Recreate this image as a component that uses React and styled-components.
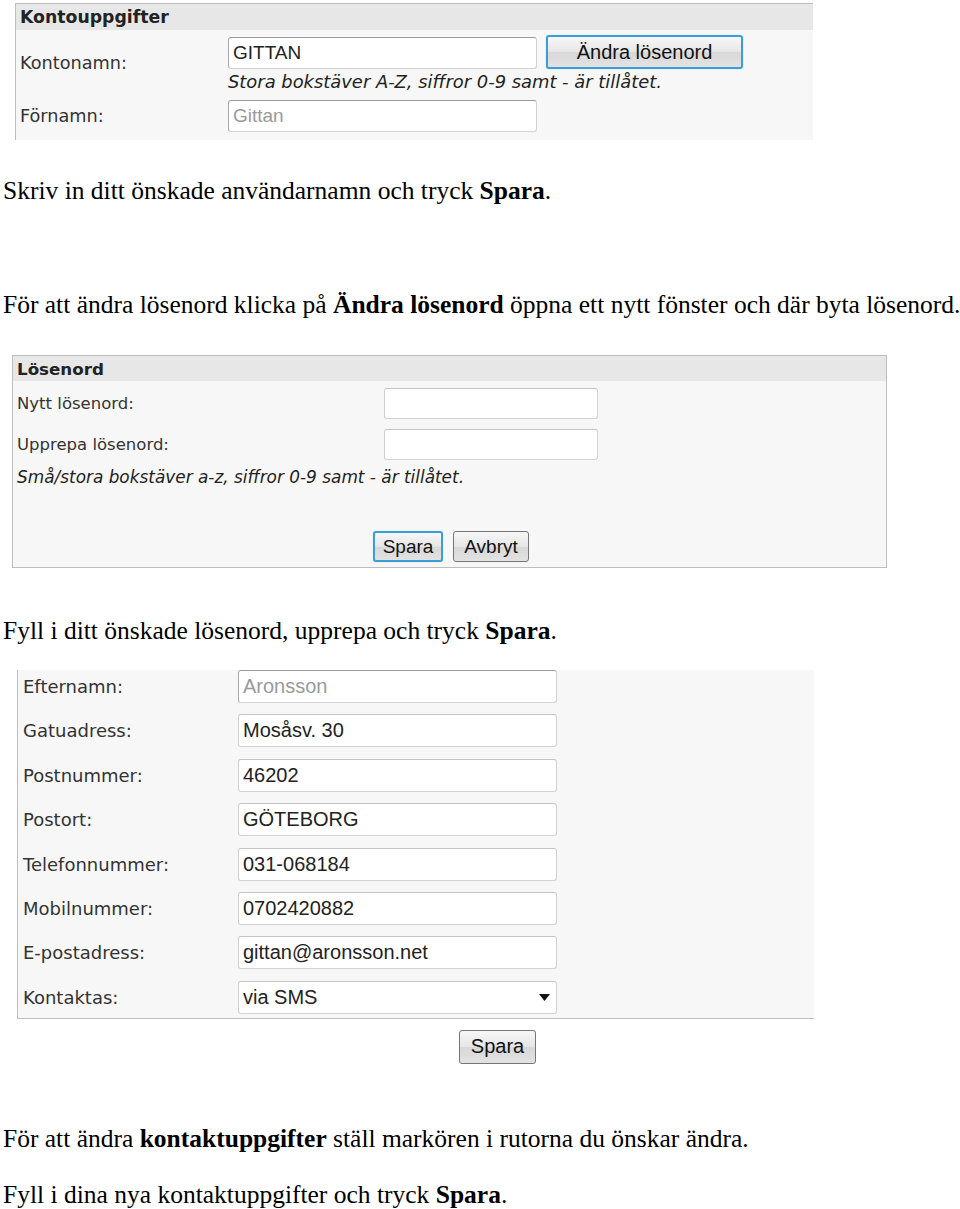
import React from 'react';
import styled, { createGlobalStyle, css } from 'styled-components';

const GlobalStyle = createGlobalStyle`
  html, body {
    margin: 0;
    padding: 0;
    background: #fff;
  }
  body {
    font-family: "Liberation Serif", "Times New Roman", serif;
    color: #000;
  }
`;

const Page = styled.div`
  width: 960px;
  padding: 3px 0 0 3px;
  box-sizing: border-box;
`;

const Text = styled.p`
  margin: ${p => p.$top || 0}px 0 0 0;
  font-size: 25.5px;
  line-height: 29px;
  white-space: nowrap;

  b {
    font-weight: bold;
  }
`;

const Panel = styled.div`
  box-sizing: border-box;
  margin: ${p => p.$top || 0}px 0 0 ${p => p.$left}px;
  width: ${p => p.$width}px;
  background: #f7f7f7;
  font-family: "DejaVu Sans", Verdana, sans-serif;
  color: #333;
  ${p => p.$boxed
    ? css`border: 1px solid #bdbdbd;`
    : css`
        border-left: 1px solid #bdbdbd;
        border-${p.$edge}: 1px solid #bdbdbd;
      `}
`;

const Header = styled.div`
  height: ${p => p.$h}px;
  background: #e7e7e7;
  padding-left: 4px;
  display: flex;
  align-items: center;
  font-weight: bold;
  font-size: ${p => p.$size}px;
  color: #222;
`;

const AccountGrid = styled.div`
  display: grid;
  grid-template-columns: 208px 309px auto;
  grid-template-rows: 32px 31px 32px;
  padding: 7px 0 8px 4px;
`;

const PasswordGrid = styled.div`
  display: grid;
  grid-template-columns: 367px 214px;
  grid-auto-rows: 31px;
  row-gap: 10px;
  padding: 7px 0 0 4px;
`;

const ContactGrid = styled.div`
  display: grid;
  grid-template-columns: 215px 319px;
  grid-auto-rows: 33px;
  row-gap: 11.4px;
  padding: 0 0 4px 5px;
`;

const Label = styled.div`
  align-self: center;
  font-size: ${p => p.$size}px;
  white-space: nowrap;
  ${p => p.$span && css`
    grid-row: span ${p.$span};
    align-self: start;
    margin-top: 16px;
  `}
`;

const Field = styled.div`
  box-sizing: border-box;
  height: 100%;
  background: #fff;
  border: 1px solid #d2d2d2;
  border-top-color: ${p => (p.$dark ? '#9a9a9a' : '#c4c4c4')};
  border-left-color: ${p => (p.$dark ? '#a8a8a8' : '#cfcfcf')};
  border-radius: 3px;
  padding: 0 4px;
  display: flex;
  align-items: center;
  justify-content: space-between;
  font-family: "Liberation Sans", Arial, sans-serif;
  font-size: ${p => p.$size || 20}px;
  color: ${p => (p.$muted ? '#9a9a9a' : '#222')};
  white-space: nowrap;
`;

const Hint = styled.div`
  grid-column: ${p => p.$col || 'auto'};
  align-self: start;
  margin-top: ${p => p.$mt}px;
  padding-left: ${p => p.$pl || 0}px;
  font-style: italic;
  font-size: ${p => p.$size}px;
  line-height: 18px;
  color: #222;
  white-space: nowrap;
`;

const Button = styled.button`
  box-sizing: border-box;
  height: ${p => p.$h || 31}px;
  width: ${p => p.$w}px;
  padding: 0;
  font-family: "Liberation Sans", Arial, sans-serif;
  font-size: ${p => p.$size || 19}px;
  color: #111;
  background: linear-gradient(#f7f7f7, #e6e6e6 50%, #d8d8d8 51%, #e2e2e2);
  border: 1px solid #767676;
  border-radius: 3px;
  ${p => p.$focus && css`
    border: 2px solid #3b9fd3;
    box-shadow: 0 0 1px #7cc3ea;
  `}
`;

const ButtonCell = styled.div`
  margin: -2px 0 0 9px;
  height: 34px;
`;

const ButtonRow = styled.div`
  display: flex;
  gap: 10px;
  padding: ${p => p.$pad};
`;

const Caret = styled.svg`
  width: 11px;
  height: 7px;
  margin-right: 2px;
`;

const contacts = [
  ['Efternamn:', 'Aronsson', true],
  ['Gatuadress:', 'Mosåsv. 30'],
  ['Postnummer:', '46202'],
  ['Postort:', 'GÖTEBORG'],
  ['Telefonnummer:', '031-068184'],
  ['Mobilnummer:', '0702420882'],
  ['E-postadress:', 'gittan@aronsson.net'],
];

export default function App() {
  return (
    <Page>
      <GlobalStyle />

      <Panel $left={12} $width={798} $edge="top">
        <Header $h={26} $size={17.3}>Kontouppgifter</Header>
        <AccountGrid>
          <Label $size={17.7} $span={2}>Kontonamn:</Label>
          <Field $dark $size={19}>GITTAN</Field>
          <ButtonCell>
            <Button $focus $w={197} $h={34} $size={20}>Ändra lösenord</Button>
          </ButtonCell>
          <Hint $col="2 / span 2" $mt={4} $size={17.9}>
            Stora bokstäver A-Z, siffror 0-9 samt - är tillåtet.
          </Hint>
          <Label $size={17.7}>Förnamn:</Label>
          <Field $dark $muted $size={19}>Gittan</Field>
        </AccountGrid>
      </Panel>

      <Text $top={36}>Skriv in ditt önskade användarnamn och tryck <b>Spara</b>.</Text>
      <Text $top={85}>
        För att ändra lösenord klicka på <b>Ändra lösenord</b> öppna ett nytt fönster och där byta lösenord.
      </Text>

      <Panel $boxed $top={36} $left={9} $width={875}>
        <Header $h={25} $size={16.7}>Lösenord</Header>
        <PasswordGrid>
          <Label $size={16.5}>Nytt lösenord:</Label>
          <Field />
          <Label $size={16.5}>Upprepa lösenord:</Label>
          <Field />
        </PasswordGrid>
        <Hint $mt={8} $size={16.9} $pl={4}>
          Små/stora bokstäver a-z, siffror 0-9 samt - är tillåtet.
        </Hint>
        <ButtonRow $pad="45px 0 5px 360px">
          <Button $focus $w={70}>Spara</Button>
          <Button $w={76}>Avbryt</Button>
        </ButtonRow>
      </Panel>

      <Text $top={48}>Fyll i ditt önskade lösenord, upprepa och tryck <b>Spara</b>.</Text>

      <Panel $top={25} $left={14} $width={797} $edge="bottom">
        <ContactGrid>
          {contacts.map(([label, value, muted]) => (
            <React.Fragment key={label}>
              <Label $size={18}>{label}</Label>
              <Field $dark={muted} $muted={muted}>{value}</Field>
            </React.Fragment>
          ))}
          <Label $size={18}>Kontaktas:</Label>
          <Field>
            via SMS
            <Caret viewBox="0 0 11 7">
              <path d="M0 0 H11 L5.5 7 Z" fill="#111" />
            </Caret>
          </Field>
        </ContactGrid>
      </Panel>

      <ButtonRow $pad="11px 0 0 456px">
        <Button $w={77} $h={34} $size={20}>Spara</Button>
      </ButtonRow>

      <Text $top={60}>
        För att ändra <b>kontaktuppgifter</b> ställ markören i rutorna du önskar ändra.
      </Text>
      <Text $top={27}>Fyll i dina nya kontaktuppgifter och tryck <b>Spara</b>.</Text>
    </Page>
  );
}
